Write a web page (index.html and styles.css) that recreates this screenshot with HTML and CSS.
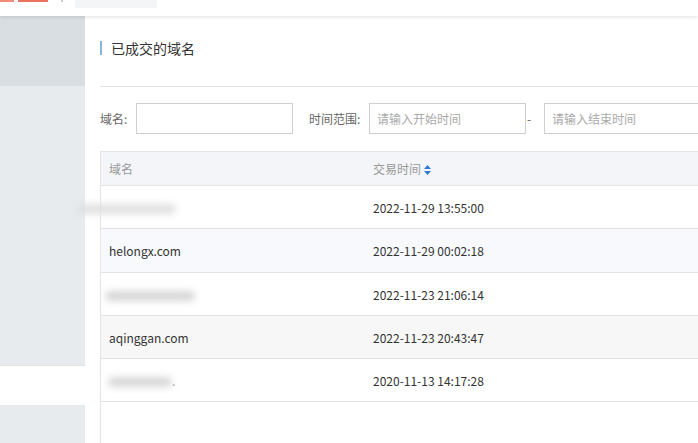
FILE: index.html
```html
<!DOCTYPE html>
<html lang="zh-CN">
<head>
<meta charset="utf-8">
<title>已成交的域名</title>
<link rel="stylesheet" href="styles.css">
</head>
<body>
<header class="topbar">
  <div class="logo"><span class="logo-a"></span><span class="logo-b"></span></div>
  <span class="crumb-mark"></span>
  <div class="crumb-box"></div>
</header>
<div class="layout">
  <aside class="sidebar">
    <div class="side-top"></div>
    <div class="side-main"></div>
    <div class="side-gap"></div>
    <div class="side-bottom"></div>
  </aside>
  <main class="content">
    <div class="title-row">
      <h1 class="title">已成交的域名</h1>
    </div>
    <div class="filters">
      <label class="flabel">域名:</label>
      <input class="finput finput-name" type="text">
      <label class="flabel flabel-time">时间范围:</label>
      <input class="finput finput-date" type="text" placeholder="请输入开始时间">
      <span class="dash">-</span>
      <input class="finput finput-end" type="text" placeholder="请输入结束时间">
    </div>
    <div class="table-wrap">
      <table class="grid">
        <thead>
          <tr><th class="c1">域名</th><th>交易时间<span class="sort"><svg width="7" height="10" viewBox="0 0 7 10"><path d="M3.5 0L7 4H0z M3.5 10L7 6H0z" fill="#2f7ad6"/></svg></span></th></tr>
        </thead>
        <tbody>
          <tr><td class="c1"><span class="blur blur1"></span></td><td>2022-11-29 13:55:00</td></tr>
          <tr class="hl tall"><td class="c1">helongx.com</td><td>2022-11-29 00:02:18</td></tr>
          <tr><td class="c1"><span class="blur blur3"></span></td><td>2022-11-23 21:06:14</td></tr>
          <tr class="alt"><td class="c1">aqinggan.com</td><td>2022-11-23 20:43:47</td></tr>
          <tr><td class="c1"><span class="blur blur5"></span><span class="dot">.</span></td><td>2020-11-13 14:17:28</td></tr>
        </tbody>
      </table>
    </div>
  </main>
</div>
</body>
</html>
```
FILE: styles.css
```css
html, body {
  margin: 0;
  padding: 0;
  background: #fff;
  font-family: "Noto Sans CJK SC", "Noto Sans", sans-serif;
  color: #333;
  overflow: hidden;
  height: 443px;
}

.topbar {
  height: 16px;
  background: #fff;
  box-shadow: 0 1px 4px rgba(0,0,0,0.12);
  display: flex;
  align-items: flex-start;
  position: relative;
  z-index: 2;
}
.logo {
  display: flex;
  gap: 4px;
  width: 56px;
}
.logo-a { width: 14px; height: 2px; background: #f08c78; }
.logo-b { width: 30px; height: 2px; background: #e9735f; }
.crumb-mark { width: 2px; height: 2px; background: #ccc; margin-left: 5px; }
.crumb-box {
  width: 82px;
  height: 8px;
  background: #f4f5f7;
  margin-left: 12px;
}

.layout {
  display: flex;
  height: 427px;
}

.sidebar {
  width: 85px;
  flex: none;
  display: flex;
  flex-direction: column;
}
.side-top { height: 70px; background: #d9dee2; }
.side-main { height: 279px; background: #e8ebee; border-bottom: 1px solid #e0e3e6; }
.side-gap { height: 39px; background: #fff; }
.side-bottom { flex: 1; background: #e8ebee; }

.content {
  flex: 1;
  padding-left: 15px;
  min-width: 0;
}

.title-row {
  padding-top: 25px;
  height: 45px;
  border-bottom: 1px solid #e2e2e2;
}
.title {
  margin: 0;
  font-size: 14px;
  font-weight: normal;
  line-height: 14px;
  border-left: 2px solid #8db3d8;
  padding-left: 9px;
  color: #333;
}

.filters {
  display: flex;
  align-items: center;
  margin-top: 16px;
  height: 31px;
  white-space: nowrap;
}
.flabel {
  font-size: 12px;
  color: #666;
  width: 36px;
  flex: none;
}
.flabel-time {
  width: 60px;
  margin-left: 16px;
}
.finput {
  height: 31px;
  box-sizing: border-box;
  border: 1px solid #cfcfcf;
  padding: 0 7px;
  font-family: inherit;
  font-size: 12px;
  color: #333;
  outline: none;
  flex: none;
}
.finput::placeholder { color: #a9a9a9; }
.finput-name { width: 157px; }
.finput-date { width: 157px; }
.dash {
  font-size: 12px;
  color: #666;
  width: 18px;
  flex: none;
  padding-left: 1px;
  box-sizing: border-box;
}
.finput-end { width: 170px; }

.table-wrap {
  margin-top: 17px;
  border-left: 1px solid #e4e4e4;
  height: 300px;
}
.grid {
  width: 100%;
  border-collapse: collapse;
  font-size: 12px;
}
.grid th {
  height: 34px;
  background: #f3f5f8;
  color: #999;
  font-weight: normal;
  text-align: left;
  padding: 0;
  border-top: 1px solid #e4e4e4;
  border-bottom: 1px solid #e4e4e4;
  box-sizing: border-box;
}
.grid td {
  height: 43px;
  padding: 0;
  border-bottom: 1px solid #e2e2e2;
  box-sizing: border-box;
  color: #333;
  white-space: nowrap;
}
.grid tr.tall td { height: 44px; }
.grid .c1 {
  width: 272px;
  padding-left: 8px;
}
.grid tr.hl td { background: #f7f9fc; }
.grid tr.alt td { background: #f7f7f7; }
.sort {
  display: inline-block;
  margin-left: 3px;
  vertical-align: -1px;
}

.blur {
  display: inline-block;
  height: 10px;
  background: #d8d8d8;
  filter: blur(3.5px);
  vertical-align: middle;
  border-radius: 5px;
}
.blur1 { width: 100px; margin-left: -33px; background: #e0e0e0; }
.blur3 { width: 90px; margin-left: -4px; background: #d6d6d6; }
.blur5 { width: 64px; margin-left: -1px; background: #d8d8d8; }
.dot { color: #999; }
```
